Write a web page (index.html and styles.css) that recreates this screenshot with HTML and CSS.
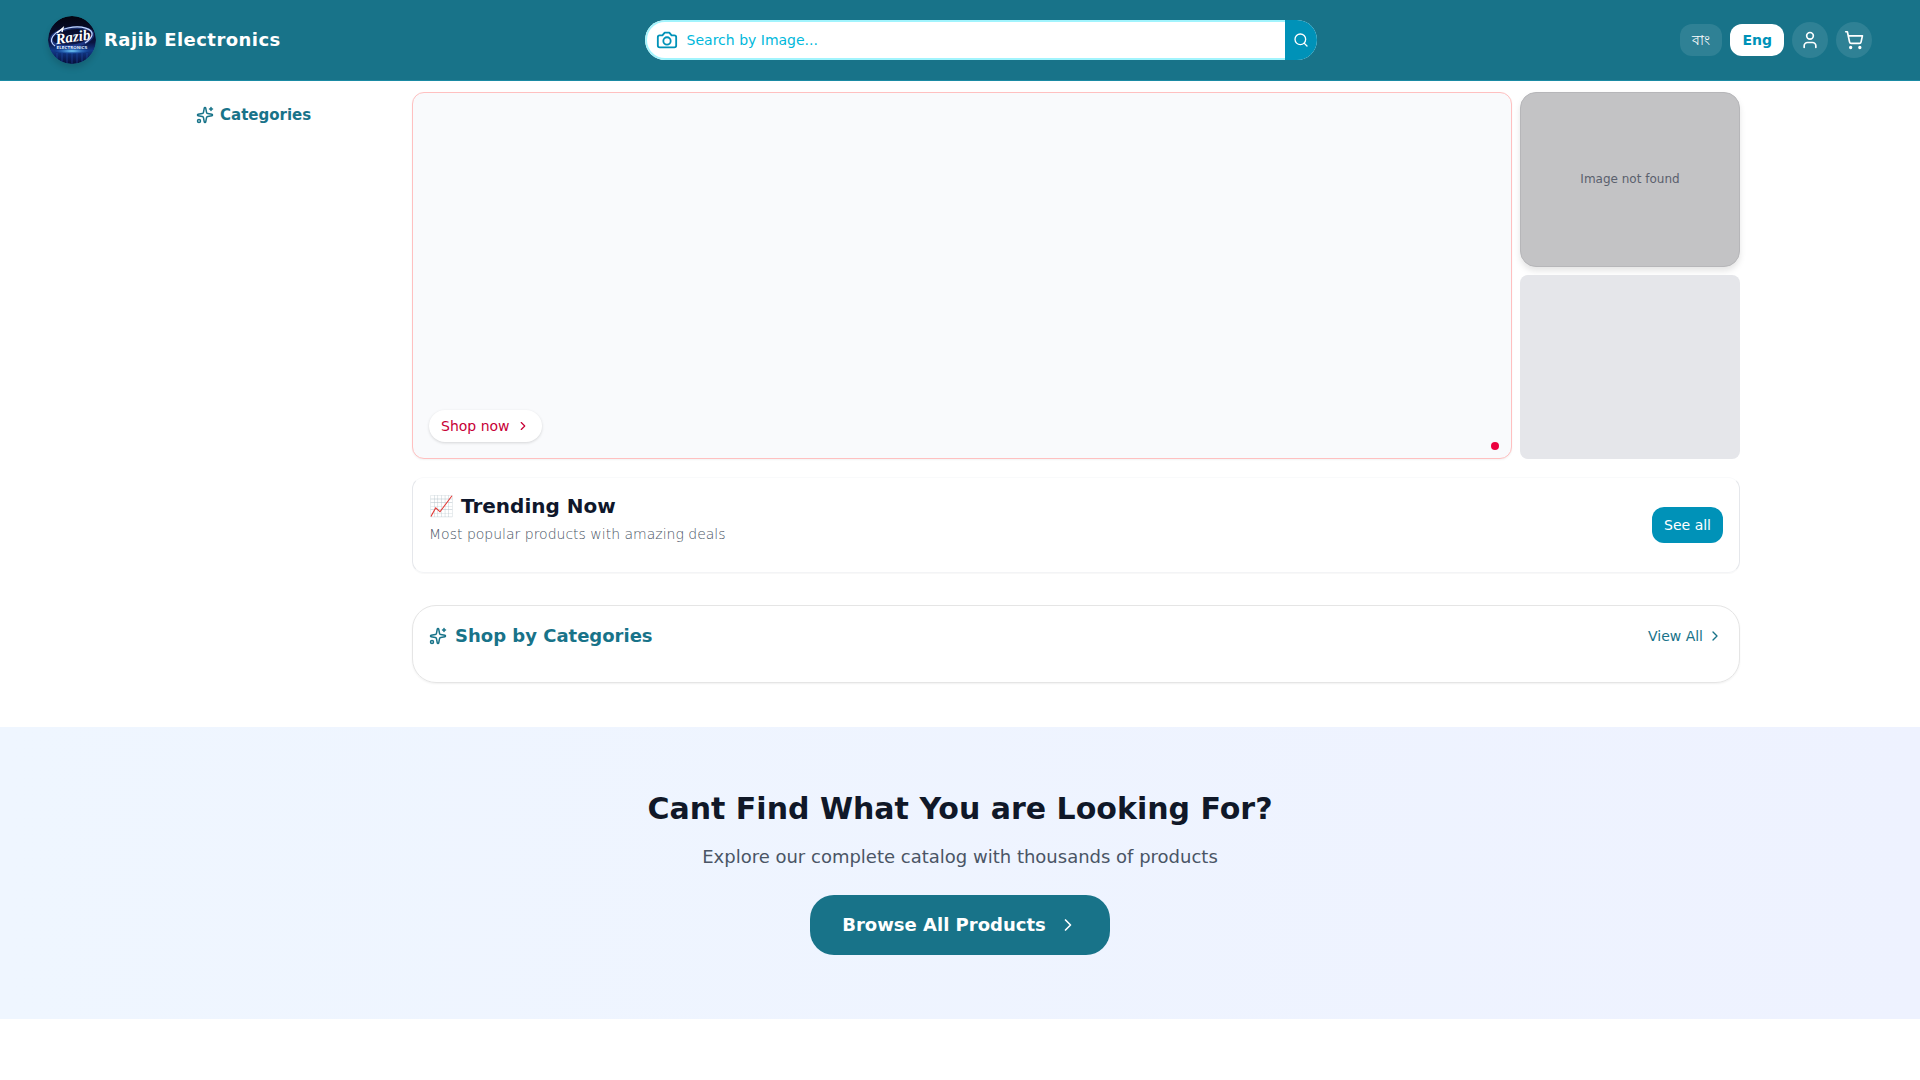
FILE: index.html
```html
<!DOCTYPE html>
<html lang="en">
<head>
    <meta charset="UTF-8">
    <meta name="viewport" content="width=device-width, initial-scale=1.0">
    <title>Rajib Electronics</title>
    <link rel="stylesheet" href="styles.css">
</head>
<body>

    <!-- shared icons -->
    <svg class="sprite" aria-hidden="true">
        <symbol id="icon-sparkles" viewBox="0 0 24 24">
            <path d="M11.017 2.814a1 1 0 0 1 1.966 0l1.051 5.558a2 2 0 0 0 1.594 1.594l5.558 1.051a1 1 0 0 1 0 1.966l-5.558 1.051a2 2 0 0 0-1.594 1.594l-1.051 5.558a1 1 0 0 1-1.966 0l-1.051-5.558a2 2 0 0 0-1.594-1.594l-5.558-1.051a1 1 0 0 1 0-1.966l5.558-1.051a2 2 0 0 0 1.594-1.594z"/>
            <path d="M20 2v4M22 4h-4"/>
            <circle cx="4" cy="20" r="2"/>
        </symbol>
        <symbol id="icon-chevron" viewBox="0 0 24 24">
            <path d="m9 18 6-6-6-6"/>
        </symbol>
    </svg>

    <header class="header">
        <a class="brand" href="#">
            <svg class="brand-logo" viewBox="0 0 48 48" aria-hidden="true">
                <defs>
                    <linearGradient id="logo-bg" x1="0" y1="0" x2="0" y2="1">
                        <stop offset="0" stop-color="#03040f"/>
                        <stop offset="0.55" stop-color="#0a1340"/>
                        <stop offset="0.72" stop-color="#123a8a"/>
                        <stop offset="1" stop-color="#060d38"/>
                    </linearGradient>
                    <radialGradient id="logo-glow">
                        <stop offset="0" stop-color="#7fdcff"/>
                        <stop offset="1" stop-color="#1b6fe0" stop-opacity="0"/>
                    </radialGradient>
                    <clipPath id="logo-clip"><circle cx="24" cy="24" r="24"/></clipPath>
                </defs>
                <g clip-path="url(#logo-clip)">
                    <rect width="48" height="48" fill="url(#logo-bg)"/>
                    <path d="M9 37v9M14 37v10M19 37v11M24 37v11M29 37v11M34 37v10M39 37v9" stroke="#2456b8" stroke-width="1" opacity="0.5"/>
                    <ellipse cx="24" cy="35" rx="18" ry="3" fill="url(#logo-glow)"/>
                    <ellipse cx="24" cy="21" rx="21" ry="9" fill="none" stroke="#3a63d8" stroke-width="3" opacity="0.4" transform="rotate(-8 24 21)"/>
                    <path d="M7 30C-1 25 5 15 20 12C34 9 45 13 44 19C43 23 40 25 37 27" fill="none" stroke="#c4d8ff" stroke-width="1.2"/>
                    <path d="M9 17l6-5-1 4" fill="none" stroke="#fff" stroke-width="1.4"/>
                    <text class="logo-script" x="25" y="26" text-anchor="middle" transform="rotate(-8 24 22)">Razib</text>
                    <text class="logo-caption" x="24" y="33" text-anchor="middle">ELECTRONICS</text>
                </g>
            </svg>
            <span class="brand-name">Rajib Electronics</span>
        </a>

        <form class="search" role="search">
            <button class="search-camera" type="button" aria-label="Search with a photo">
                <svg class="icon" viewBox="0 0 24 24"><path d="M14.5 4h-5L7 7H4a2 2 0 0 0-2 2v9a2 2 0 0 0 2 2h16a2 2 0 0 0 2-2V9a2 2 0 0 0-2-2h-3l-2.5-3z"/><circle cx="12" cy="13" r="4"/></svg>
            </button>
            <input class="search-input" type="text" placeholder="Search by Image..." aria-label="Search">
            <button class="search-btn" type="submit" aria-label="Search">
                <svg class="icon" viewBox="0 0 24 24"><circle cx="11" cy="11" r="8"/><path d="m21 21-4.3-4.3"/></svg>
            </button>
        </form>

        <div class="actions">
            <button class="lang-btn" type="button" lang="bn">বাং</button>
            <button class="lang-btn active" type="button">Eng</button>
            <a class="round-btn" href="#" aria-label="Account">
                <svg class="icon" viewBox="0 0 24 24"><path d="M19 21v-2a4 4 0 0 0-4-4H9a4 4 0 0 0-4 4v2"/><circle cx="12" cy="7" r="4"/></svg>
            </a>
            <a class="round-btn" href="#" aria-label="Cart">
                <svg class="icon" viewBox="0 0 24 24"><circle cx="8" cy="21" r="1"/><circle cx="19" cy="21" r="1"/><path d="M2.05 2.05h2l2.66 12.42a2 2 0 0 0 2 1.58h9.78a2 2 0 0 0 1.95-1.57l1.65-7.43H5.12"/></svg>
            </a>
        </div>
    </header>

    <main>
        <div class="container">
            <aside class="sidebar">
                <h2 class="sidebar-title"><svg class="icon"><use href="#icon-sparkles"/></svg>Categories</h2>
            </aside>

            <div class="content">
                <section class="hero">
                    <div class="banner">
                        <a class="shop-now" href="#">Shop now<svg class="icon"><use href="#icon-chevron"/></svg></a>
                        <button class="dot" type="button" aria-label="Slide 1"></button>
                    </div>
                    <div class="side-banners">
                        <div class="missing">Image not found</div>
                        <div class="skeleton"></div>
                    </div>
                </section>

                <section class="trending">
                    <div class="trending-head">
                        <h2 class="trending-title">📈 Trending Now</h2>
                        <p class="trending-text">Most popular products with amazing deals</p>
                    </div>
                    <a class="see-all" href="#">See all</a>
                </section>

                <section class="shop-categories">
                    <h2 class="shop-title"><svg class="icon"><use href="#icon-sparkles"/></svg>Shop by Categories</h2>
                    <a class="view-all" href="#">View All<svg class="icon"><use href="#icon-chevron"/></svg></a>
                </section>
            </div>
        </div>

        <section class="cta">
            <h2 class="cta-title">Cant Find What You are Looking For?</h2>
            <p class="cta-text">Explore our complete catalog with thousands of products</p>
            <a class="cta-btn" href="#">Browse All Products<svg class="icon"><use href="#icon-chevron"/></svg></a>
        </section>
    </main>

</body>
</html>
```
FILE: styles.css
```css
* {
    box-sizing: border-box;
    margin: 0;
    padding: 0;
}

body {
    font-family: 'DejaVu Sans', sans-serif;
    font-size: 14px;
    line-height: 20px;
    background-color: #fff;
    color: #101828;
}

a {
    color: inherit;
    text-decoration: none;
}

button {
    border: none;
    background: none;
    font: inherit;
    cursor: pointer;
}

.sprite {
    display: none;
}

.icon {
    width: 16px;
    height: 16px;
    flex-shrink: 0;
    fill: none;
    stroke: currentColor;
    stroke-width: 2;
    stroke-linecap: round;
    stroke-linejoin: round;
}

/* header */
.header {
    display: flex;
    align-items: center;
    padding: 16px 48px;
    background-color: #187389;
    border-bottom: 1px solid #1a8aa3;
}

.brand {
    display: flex;
    align-items: center;
    gap: 8px;
    color: #fff;
}

.brand-logo {
    width: 48px;
    height: 48px;
    border-radius: 50%;
    box-shadow: 0 4px 6px rgba(0, 0, 0, 0.15);
}

.logo-script {
    font-family: 'Liberation Serif', serif;
    font-size: 15px;
    font-weight: bold;
    font-style: italic;
    fill: #fff;
}

.logo-caption {
    font-family: 'DejaVu Sans', sans-serif;
    font-size: 4px;
    font-weight: bold;
    fill: #dbe8ff;
}

.brand-name {
    font-size: 18px;
    line-height: 28px;
    font-weight: bold;
    letter-spacing: 0.025em;
}

.search {
    display: flex;
    width: 100%;
    max-width: 672px;
    height: 40px;
    margin: 0 auto;
    border-radius: 20px;
    overflow: hidden;
    background-color: #fff;
}

.search-camera {
    display: flex;
    align-items: center;
    width: 42px;
    padding-left: 9px;
    border: 2px solid #a2f4fd;
    border-right: none;
    border-radius: 20px 0 0 20px;
    color: #0092b8;
}

.search-camera .icon {
    width: 22px;
    height: 22px;
}

.search-input {
    flex: 1;
    min-width: 0;
    border: solid #a2f4fd;
    border-width: 2px 0;
    font: inherit;
    color: #0092b8;
    outline: none;
}

.search-input::placeholder {
    color: #00b8db;
    opacity: 1;
}

.search-btn {
    display: flex;
    align-items: center;
    justify-content: center;
    width: 32px;
    background-color: #0092b8;
    color: #fff;
}

.actions {
    display: flex;
    align-items: center;
    gap: 8px;
}

.lang-btn {
    height: 32px;
    padding: 0 12px;
    border-radius: 12px;
    background-color: rgba(255, 255, 255, 0.1);
    color: #fff;
    font-weight: 500;
}

.lang-btn.active {
    background-color: #fff;
    color: #0092b8;
    font-weight: bold;
}

.round-btn {
    display: flex;
    align-items: center;
    justify-content: center;
    width: 36px;
    height: 36px;
    border-radius: 50%;
    background-color: rgba(255, 255, 255, 0.1);
    color: #fff;
}

.round-btn .icon {
    width: 20px;
    height: 20px;
}

/* page columns */
.container {
    display: grid;
    grid-template-columns: 224px 1fr;
    gap: 8px;
    max-width: 1560px;
    margin: 0 auto;
    padding: 11px 0 44px;
}

.sidebar {
    padding: 12px 16px;
}

.sidebar-title {
    display: flex;
    align-items: center;
    gap: 6px;
    font-size: 15px;
    line-height: 22px;
    color: #187389;
}

.sidebar-title .icon {
    width: 18px;
    height: 18px;
}

.hero {
    display: grid;
    grid-template-columns: 5fr 1fr;
    gap: 8px;
}

.banner {
    position: relative;
    aspect-ratio: 3 / 1;
    border: 1px solid #ffc0c0;
    border-radius: 12px;
    background-color: #f9fafc;
    box-shadow: 0 1px 2px rgba(0, 0, 0, 0.05);
}

.shop-now {
    position: absolute;
    left: 16px;
    bottom: 16px;
    display: flex;
    align-items: center;
    gap: 6px;
    padding: 6px 12px;
    border-radius: 16px;
    background-color: #fff;
    box-shadow: 0 1px 3px rgba(0, 0, 0, 0.15);
    color: #c70036;
}

.shop-now .icon {
    width: 14px;
    height: 14px;
}

.dot {
    position: absolute;
    right: 12px;
    bottom: 8px;
    width: 8px;
    height: 8px;
    border-radius: 50%;
    background-color: #ec003f;
}

.side-banners {
    display: grid;
    grid-template-rows: 175fr 184fr;
    gap: 8px;
}

.missing {
    display: flex;
    align-items: center;
    justify-content: center;
    border: 1px solid #b6b6b9;
    border-radius: 16px;
    background-color: #c3c3c5;
    box-shadow: 0 4px 6px rgba(0, 0, 0, 0.1);
    font-size: 12px;
    color: #5a606d;
}

.skeleton {
    border-radius: 8px;
    background-color: #e5e6ea;
}

.trending {
    display: flex;
    align-items: center;
    justify-content: space-between;
    margin-top: 18px;
    padding: 12px 16px;
    border: 1px solid #e5e7eb;
    border-top-color: #f9fafb;
    border-bottom-color: #f3f4f6;
    border-radius: 12px;
    box-shadow: 0 1px 1px rgba(0, 0, 0, 0.03);
}

.trending-head {
    padding-bottom: 14px;
}

.trending-title {
    font-size: 20px;
    line-height: 32px;
    color: #0f172b;
}

.trending-text {
    line-height: 24px;
    font-weight: 200;
    color: #4a5565;
}

.see-all {
    padding: 8px 12px;
    border-radius: 12px;
    background-color: #0092b8;
    color: #fff;
}

.shop-categories {
    display: flex;
    align-items: center;
    justify-content: space-between;
    margin-top: 32px;
    padding: 16px 16px 32px;
    border: 1px solid #e5e5e5;
    border-radius: 24px;
    box-shadow: 0 1px 2px rgba(0, 0, 0, 0.06);
    color: #187389;
}

.shop-title {
    display: flex;
    align-items: center;
    gap: 8px;
    font-size: 18px;
    line-height: 28px;
}

.shop-title .icon {
    width: 18px;
    height: 18px;
}

.view-all {
    display: flex;
    align-items: center;
    gap: 4px;
}

/* bottom call to action */
.cta {
    padding: 64px 16px;
    text-align: center;
    background: linear-gradient(to right, #eff6ff, #eef2ff);
}

.cta-title {
    font-size: 30px;
    line-height: 36px;
}

.cta-text {
    margin: 16px 0 24px;
    font-size: 18px;
    line-height: 28px;
    color: #4a5565;
}

.cta-btn {
    display: inline-flex;
    align-items: center;
    gap: 12px;
    padding: 16px 32px;
    border-radius: 24px;
    background-color: #187389;
    color: #fff;
    font-size: 18px;
    line-height: 28px;
    font-weight: bold;
}

.cta-btn .icon {
    width: 20px;
    height: 20px;
}
```
